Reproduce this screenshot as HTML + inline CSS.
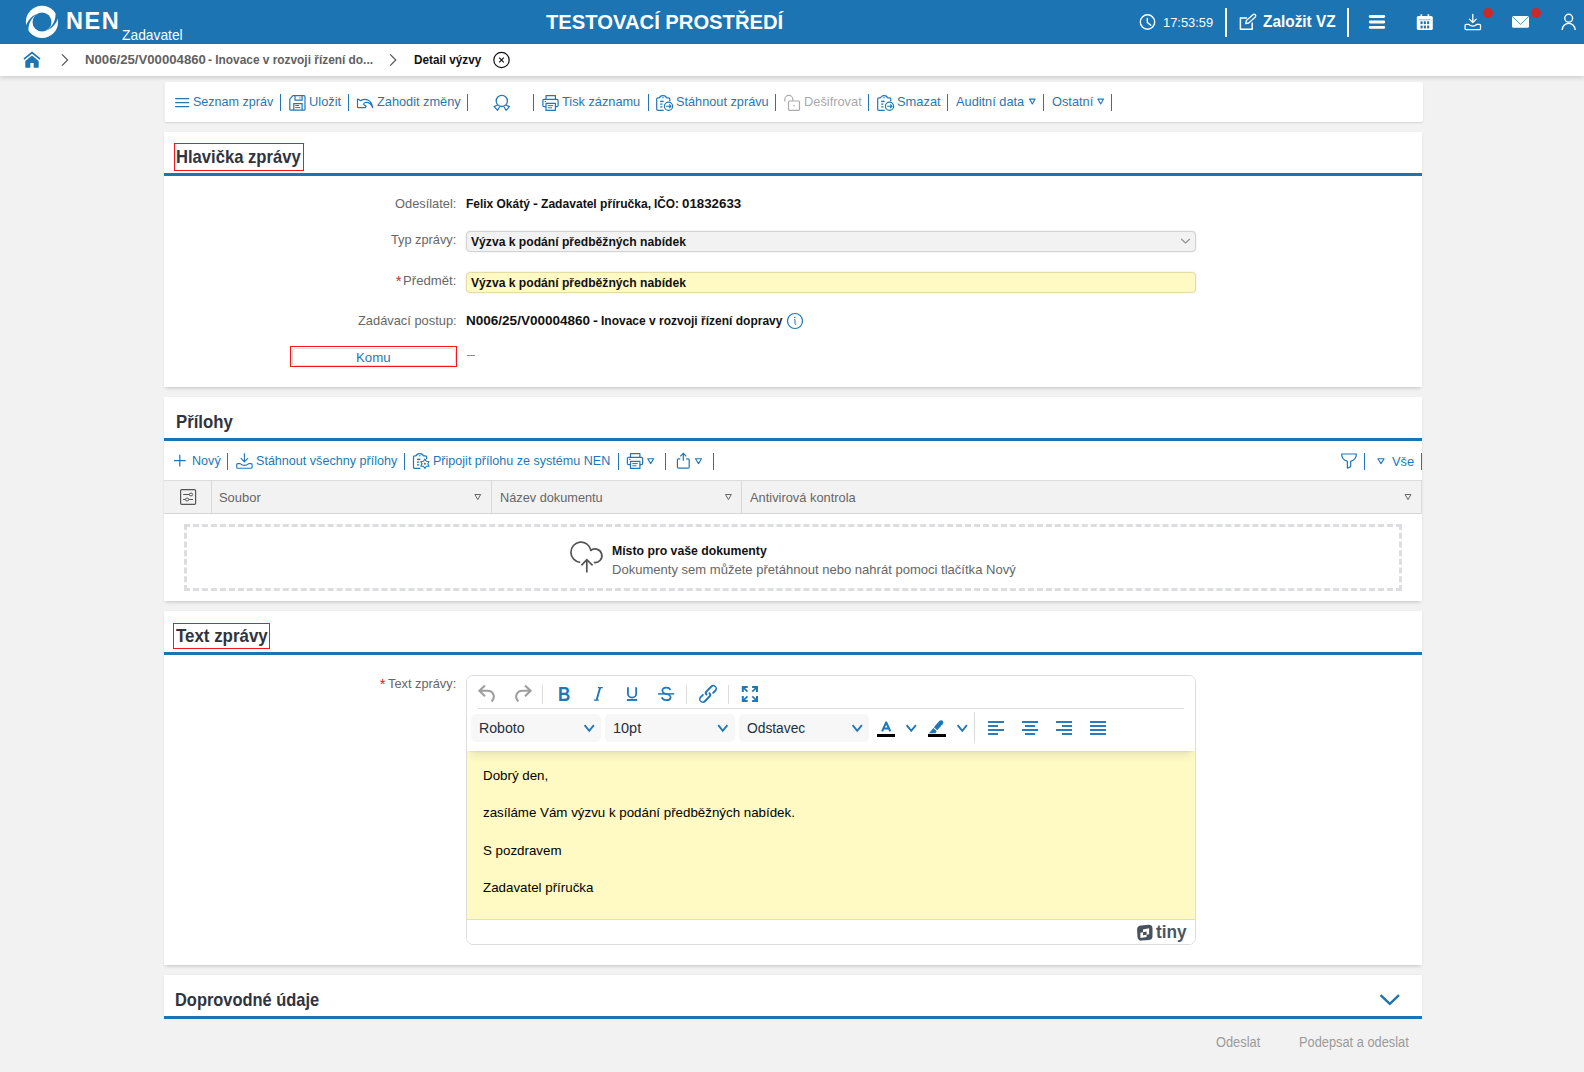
<!DOCTYPE html><html lang="cs"><head><meta charset="utf-8"><title>NEN - Detail výzvy</title><style>
*{box-sizing:border-box;margin:0;padding:0}
html,body{width:1584px;height:1072px;overflow:hidden}
body{background:#f2f2f2;font-family:"Liberation Sans",sans-serif;position:relative;color:#111}
.abs{position:absolute}
.t{position:absolute;white-space:nowrap;line-height:0;height:100px;font-size:13px}
.t i{display:inline-block;height:100px;width:0}
.t span{display:inline-block;transform-origin:0 50%}
.b{font-weight:700}
#topbar{position:absolute;left:0;top:0;width:1584px;height:44px;background:#1c74b3}
#crumbs{position:absolute;left:0;top:44px;width:1584px;height:32px;background:#fff;box-shadow:0 2px 4px rgba(0,0,0,.15)}
.card{position:absolute;left:164px;width:1258px;background:#fff;box-shadow:0 3px 4px -2px rgba(0,0,0,.16),0 1px 3px rgba(0,0,0,.05)}
.hline{position:absolute;left:0;width:100%;top:41px;height:3px;background:#1c74b3}
.sep{position:absolute;width:1.5px;background:#1f77b7}
.redbox{position:absolute;border:1.5px solid #f5141f}
svg{position:absolute;overflow:visible}
</style></head><body>
<div id="topbar"></div>
<div id="crumbs"></div>
<div class="abs" style="left:1225px;top:8px;width:2px;height:29px;background:#fff"></div>
<div class="abs" style="left:1347px;top:8px;width:2px;height:29px;background:#fff"></div>
<div class="abs" style="left:1483px;top:8px;width:10px;height:10px;border-radius:50%;background:#cb2a2b"></div>
<div class="abs" style="left:1531px;top:8px;width:10px;height:10px;border-radius:50%;background:#cb2a2b"></div>
<div class="card" style="top:82px;height:40px;width:1259px;border-radius:2px;box-shadow:0 1px 2px rgba(0,0,0,.13),inset 1px 0 0 #f0f0f0"></div>
<div class="sep" style="left:279.75px;top:94px;height:16.5px"></div>
<div class="sep" style="left:347.75px;top:94px;height:16.5px"></div>
<div class="sep" style="left:466.75px;top:94px;height:16.5px"></div>
<div class="sep" style="left:532.75px;top:94px;height:16.5px"></div>
<div class="sep" style="left:647.75px;top:94px;height:16.5px"></div>
<div class="sep" style="left:774.75px;top:94px;height:16.5px"></div>
<div class="sep" style="left:867.75px;top:94px;height:16.5px"></div>
<div class="sep" style="left:946.75px;top:94px;height:16.5px"></div>
<div class="sep" style="left:1042.75px;top:94px;height:16.5px"></div>
<div class="sep" style="left:1110.75px;top:94px;height:16.5px"></div>
<div class="card" style="top:132px;height:255px"><div class="hline"></div></div>
<div class="redbox" style="left:173.5px;top:143px;width:130.5px;height:28px"></div>
<div class="abs" style="left:466px;top:231px;width:730px;height:21px;background:#f2f2f2;border:1px solid #d3d3d3;border-radius:4px;box-shadow:0 0 2px rgba(0,0,0,.12)"></div>
<div class="abs" style="left:466px;top:272px;width:730px;height:21px;background:#fff9c4;border:1px solid #e4dca2;border-radius:4px;box-shadow:0 0 2px rgba(0,0,0,.12)"></div>
<div class="abs" style="left:291.5px;top:347.5px;width:164px;height:18px;background:#fff;border:1px solid #dcdcdc;border-radius:4px"></div>
<div class="redbox" style="left:290px;top:346px;width:167px;height:20.5px"></div>
<div class="abs" style="left:466.5px;top:354.8px;width:8.5px;height:1.2px;background:#8c8c8c"></div>
<div class="card" style="top:397px;height:204px"><div class="hline"></div></div>
<div class="sep" style="left:226.75px;top:452.5px;height:17px"></div>
<div class="sep" style="left:403.75px;top:452.5px;height:17px"></div>
<div class="sep" style="left:617.75px;top:452.5px;height:17px"></div>
<div class="sep" style="left:664.75px;top:452.5px;height:17px"></div>
<div class="sep" style="left:712.75px;top:452.5px;height:17px"></div>
<div class="sep" style="left:1363.75px;top:452.5px;height:17px"></div>
<div class="sep" style="left:1420.5px;top:452.5px;height:17px"></div>
<div class="abs" style="left:164px;top:480px;width:1258px;height:34px;background:#f2f2f2;border-top:1px solid #dcdcdc;border-bottom:1px solid #d6d6d6;border-right:1px solid #dcdcdc"></div>
<div class="abs" style="left:211px;top:481px;width:1px;height:32px;background:#d9d9d9"></div>
<div class="abs" style="left:491px;top:481px;width:1px;height:32px;background:#d9d9d9"></div>
<div class="abs" style="left:741px;top:481px;width:1px;height:32px;background:#d9d9d9"></div>
<div class="abs" style="left:184px;top:524px;width:1218px;height:67px;border:3px dashed #dcdde0"></div>
<div class="card" style="top:611px;height:354px"><div class="hline"></div></div>
<div class="redbox" style="left:173px;top:623px;width:97px;height:25.5px"></div>
<div class="abs" style="left:466px;top:675px;width:730px;height:270px;background:#fff;border:1px solid #dcdcdc;border-radius:7px;overflow:hidden"><div class="abs" style="left:0;top:75px;width:728px;height:168px;background:#fff9c4"></div><div class="abs" style="left:0;top:0;width:728px;height:75px;background:#fff;box-shadow:0 2px 2px -2px rgba(34,47,62,.18),0 8px 8px -4px rgba(34,47,62,.10)"></div><div class="abs" style="left:0;top:243px;width:728px;height:26px;background:#fff;border-top:1px solid #dcdcdc"></div><div class="abs" style="left:11px;top:32px;width:706px;height:1px;background:#dedede"></div></div>
<div class="abs" style="left:471px;top:714px;width:130px;height:28px;background:#f7f7f7;border-radius:5px"></div>
<div class="abs" style="left:605px;top:714px;width:130px;height:28px;background:#f7f7f7;border-radius:5px"></div>
<div class="abs" style="left:739px;top:714px;width:130px;height:28px;background:#f7f7f7;border-radius:5px"></div>
<div class="abs" style="left:542.0px;top:685.0px;width:1px;height:18.5px;background:#dcdcdc"></div>
<div class="abs" style="left:686.0px;top:685.0px;width:1px;height:18.5px;background:#dcdcdc"></div>
<div class="abs" style="left:728.0px;top:685.0px;width:1px;height:18.5px;background:#dcdcdc"></div>
<div class="abs" style="left:974.0px;top:712.0px;width:1px;height:30.5px;background:#dcdcdc"></div>
<div class="abs" style="left:877px;top:734px;width:18px;height:3px;background:#000"></div>
<div class="abs" style="left:928px;top:734px;width:18px;height:3px;background:#000"></div>
<div class="card" style="top:975px;height:44px;box-shadow:0 0 3px rgba(0,0,0,.06)"><div class="hline"></div></div>
<svg width="1584" height="1072" viewBox="0 0 1584 1072" style="left:0;top:0"><circle cx="42" cy="21.9" r="16.1" fill="#fff"/>
<circle cx="42" cy="22" r="9.5" fill="#1c74b3"/>
<path d="M36.4 14 C30 17 27 22 25.4 27.6 L28.6 32.8 C27.6 25 30.6 19 36.4 14 Z" fill="#1c74b3"/>
<path d="M47.6 30 C54 27 57 22 58.6 16.4 L55.4 11.2 C56.4 19 53.4 25 47.6 30 Z" fill="#1c74b3"/>
<path d="M24.5 58.7 L32 52.7 L39.5 58.7" fill="none" stroke="#1c74b3" stroke-width="1.7" stroke-linecap="round" stroke-linejoin="miter"/>
<path d="M25.3 61 L32 55.5 L38.7 61 V67.8 H33.7 V63 H30.3 V67.8 H25.3 Z" fill="#1c74b3"/>
<path d="M62 54.4 L67.6 60 L62 65.6" fill="none" stroke="#555" stroke-width="1.2"/>
<path d="M390.2 54.4 L395.8 60 L390.2 65.6" fill="none" stroke="#555" stroke-width="1.2"/>
<circle cx="501.5" cy="60" r="7.7" fill="none" stroke="#111" stroke-width="1.2"/>
<path d="M499.2 57.7 L503.8 62.3 M503.8 57.7 L499.2 62.3" fill="none" stroke="#111" stroke-width="1.2"/>
<circle cx="1147.5" cy="22" r="7.2" fill="none" stroke="#fff" stroke-width="1.4"/>
<path d="M1147.3 18.4 V22.4 L1150.8 25.2" fill="none" stroke="#fff" stroke-width="1.4" stroke-linecap="round" stroke-linejoin="round"/>
<path d="M1247 17.9 H1240.4 V29.2 H1252.2 V22.6" fill="none" stroke="#fff" stroke-width="1.5" stroke-linejoin="round"/>
<path d="M1245.6 23.6 L1246.4 20.6 L1252.9 14.7 a1.7 1.7 0 0 1 2.4 2.4 L1248.7 23 Z" fill="none" stroke="#fff" stroke-width="1.3" stroke-linejoin="round"/>
<path d="M1370.2 16.5 H1383.8" fill="none" stroke="#fff" stroke-width="2.8" stroke-linecap="round"/>
<path d="M1370.2 22 H1383.8" fill="none" stroke="#fff" stroke-width="2.8" stroke-linecap="round"/>
<path d="M1370.2 27.4 H1383.8" fill="none" stroke="#fff" stroke-width="2.8" stroke-linecap="round"/>
<rect x="1416.8" y="16" width="16" height="14" rx="1.6" fill="#fff"/>
<path d="M1421.3 14.2 V17 M1428.4 14.2 V17" fill="none" stroke="#fff" stroke-width="1.7"/>
<rect x="1420.5" y="21.3" width="2.1" height="2.8" fill="#1c74b3"/>
<rect x="1420.5" y="25.6" width="2.1" height="2.8" fill="#1c74b3"/>
<rect x="1423.8" y="21.3" width="2.1" height="2.8" fill="#1c74b3"/>
<rect x="1423.8" y="25.6" width="2.1" height="2.8" fill="#1c74b3"/>
<rect x="1427.1" y="21.3" width="2.1" height="2.8" fill="#1c74b3"/>
<rect x="1427.1" y="25.6" width="2.1" height="2.8" fill="#1c74b3"/>
<rect x="1418.8" y="19.3" width="12" height="0.9" fill="#1c74b3" opacity=".55"/>
<path d="M1472.8 14.3 V22.3 M1469.4 19.1 L1472.8 22.5 L1476.2 19.1" fill="none" stroke="#fff" stroke-width="1.3" stroke-linecap="round" stroke-linejoin="round"/>
<path d="M1466.1 24.3 h2.4 q4.3 3.6 8.6 0 h2.4 a1 1 0 0 1 1 1 v3.4 a1 1 0 0 1 -1 1 h-13.4 a1 1 0 0 1 -1 -1 v-3.4 a1 1 0 0 1 1 -1 z" fill="none" stroke="#fff" stroke-width="1.3" stroke-linejoin="round"/>
<rect x="1512" y="16" width="17" height="11.8" rx="1.6" fill="#fff"/>
<path d="M1512.6 16.8 L1520.5 24.4 L1528.4 16.8" fill="none" stroke="#1c74b3" stroke-width="0.8"/>
<circle cx="1568.7" cy="18.2" r="3.9" fill="none" stroke="#fff" stroke-width="1.4"/>
<path d="M1562.2 30 a6.5 6.6 0 0 1 13 0" fill="none" stroke="#fff" stroke-width="1.4"/>
<path d="M175.2 98.5 H189.2 M175.2 102.5 H189.2 M175.2 106.5 H189.2" fill="none" stroke="#1f77b7" stroke-width="1.25"/>
<path d="M292.9 95.7 H304 a1 1 0 0 1 1 1 V109.2 a1 1 0 0 1 -1 1 H290.8 a1 1 0 0 1 -1 -1 V99.2 Z" fill="none" stroke="#1f77b7" stroke-width="1.2" stroke-linejoin="round"/>
<path d="M295 95.8 V100.2 H302.1 V95.8" fill="none" stroke="#1f77b7" stroke-width="1.2"/>
<path d="M299.9 97.2 V98.4" fill="none" stroke="#1f77b7" stroke-width="1.1"/>
<path d="M293.8 110 V103.7 H302.1 V110" fill="none" stroke="#1f77b7" stroke-width="1.2"/>
<path d="M295.3 105.5 H299 M295.3 107.6 H300.3" fill="none" stroke="#1f77b7" stroke-width="1"/>
<path d="M357.5 99.7 Q357.5 98.7 358.5 99.2 L360.2 100.5 Q361 100.9 361.9 99.9 C365.4 98.5 371.6 99.4 372.7 107.7 C371 103.2 368 102.2 365.3 102.5 Q363.5 103 363.7 104.4 L366.2 106.2 L365.3 107.6 H358.4 Q357.5 107.6 357.5 106.7 Z" fill="none" stroke="#1f77b7" stroke-width="1.2" stroke-linejoin="round"/>
<circle cx="501.8" cy="100.9" r="5.6" fill="none" stroke="#1f77b7" stroke-width="1.3"/>
<path d="M497.6 105 L494.1 106.6 L497.6 110.3 L499.8 106.5 M506 105 L509.5 106.6 L506 110.3 L503.8 106.5" fill="none" stroke="#1f77b7" stroke-width="1.2" stroke-linejoin="round"/>
<path d="M546 99.3 V95.7 H555.4 V99.3" fill="none" stroke="#1f77b7" stroke-width="1.2" stroke-linejoin="round"/>
<path d="M546 106.6 H544.1 a1.2 1.2 0 0 1 -1.2 -1.2 V100.5 a1.2 1.2 0 0 1 1.2 -1.2 H556.9 a1.2 1.2 0 0 1 1.2 1.2 V105.4 a1.2 1.2 0 0 1 -1.2 1.2 H555.4" fill="none" stroke="#1f77b7" stroke-width="1.2"/>
<path d="M546 103.4 H555.4 V110.4 H546 Z" fill="none" stroke="#1f77b7" stroke-width="1.2" stroke-linejoin="round"/>
<path d="M547.8 105.6 H553.2 M547.8 107.8 H552" fill="none" stroke="#1f77b7" stroke-width="1"/>
<path d="M544.6 101.4 h1.4" fill="none" stroke="#1f77b7" stroke-width="1"/>
<path d="M630.5 457.3 V453.7 H639.9 V457.3" fill="none" stroke="#1f77b7" stroke-width="1.2" stroke-linejoin="round"/>
<path d="M630.5 464.6 H628.6 a1.2 1.2 0 0 1 -1.2 -1.2 V458.5 a1.2 1.2 0 0 1 1.2 -1.2 H641.4 a1.2 1.2 0 0 1 1.2 1.2 V463.4 a1.2 1.2 0 0 1 -1.2 1.2 H639.9" fill="none" stroke="#1f77b7" stroke-width="1.2"/>
<path d="M630.5 461.4 H639.9 V468.4 H630.5 Z" fill="none" stroke="#1f77b7" stroke-width="1.2" stroke-linejoin="round"/>
<path d="M632.3 463.6 H637.7 M632.3 465.8 H636.5" fill="none" stroke="#1f77b7" stroke-width="1"/>
<path d="M629.1 459.4 h1.4" fill="none" stroke="#1f77b7" stroke-width="1"/>
<path d="M659.6 97.8 H657.9 a1.2 1.2 0 0 0 -1.2 1.2 V109.2 a1.2 1.2 0 0 0 1.2 1.2 H663.6" fill="none" stroke="#1f77b7" stroke-width="1.2"/>
<path d="M666.4 97.8 H668.6 a1.2 1.2 0 0 1 1.2 1.2 V101.2" fill="none" stroke="#1f77b7" stroke-width="1.2"/>
<path d="M659.6 98 a3.4 2.3 0 0 1 6.8 0" fill="none" stroke="#1f77b7" stroke-width="1.2"/>
<circle cx="663" cy="97.7" r="0.7" fill="#1f77b7"/>
<path d="M660.2 101.4 h3.4" fill="none" stroke="#1f77b7" stroke-width="1.5"/>
<path d="M660.2 104.1 h2.2 M660.2 106.8 h2.2" fill="none" stroke="#1f77b7" stroke-width="1.3"/>
<circle cx="668.5" cy="106.2" r="4.1" fill="none" stroke="#1f77b7" stroke-width="1.2"/>
<path d="M666 106.2 H670.8 M669.2 104.4 L671 106.2 L669.2 108" fill="none" stroke="#1f77b7" stroke-width="1.1"/>
<path d="M880.6 97.8 H878.9 a1.2 1.2 0 0 0 -1.2 1.2 V109.2 a1.2 1.2 0 0 0 1.2 1.2 H884.6" fill="none" stroke="#1f77b7" stroke-width="1.2"/>
<path d="M887.4 97.8 H889.6 a1.2 1.2 0 0 1 1.2 1.2 V101.2" fill="none" stroke="#1f77b7" stroke-width="1.2"/>
<path d="M880.6 98 a3.4 2.3 0 0 1 6.8 0" fill="none" stroke="#1f77b7" stroke-width="1.2"/>
<circle cx="884" cy="97.7" r="0.7" fill="#1f77b7"/>
<path d="M881.2 101.4 h3.4" fill="none" stroke="#1f77b7" stroke-width="1.5"/>
<path d="M881.2 104.1 h2.2 M881.2 106.8 h2.2" fill="none" stroke="#1f77b7" stroke-width="1.3"/>
<circle cx="889.5" cy="106.2" r="4.1" fill="none" stroke="#1f77b7" stroke-width="1.2"/>
<path d="M887 106.2 H891.8 M890.2 104.4 L892 106.2 L890.2 108" fill="none" stroke="#1f77b7" stroke-width="1.1"/>
<path d="M416.4 455.8 H414.7 a1.2 1.2 0 0 0 -1.2 1.2 V467.2 a1.2 1.2 0 0 0 1.2 1.2 H420.4" fill="none" stroke="#1f77b7" stroke-width="1.2"/>
<path d="M423.2 455.8 H425.4 a1.2 1.2 0 0 1 1.2 1.2 V459.2" fill="none" stroke="#1f77b7" stroke-width="1.2"/>
<path d="M416.4 456 a3.4 2.3 0 0 1 6.8 0" fill="none" stroke="#1f77b7" stroke-width="1.2"/>
<circle cx="419.8" cy="455.7" r="0.7" fill="#1f77b7"/>
<path d="M417 459.4 h3.4" fill="none" stroke="#1f77b7" stroke-width="1.5"/>
<path d="M417 462.1 h2.2 M417 464.8 h2.2" fill="none" stroke="#1f77b7" stroke-width="1.3"/>
<path d="M424.90 459.10 L426.35 461.29 L428.97 461.45 L427.80 463.80 L428.97 466.15 L426.35 466.31 L424.90 468.50 L423.45 466.31 L420.83 466.15 L422.00 463.80 L420.83 461.45 L423.45 461.29 Z" fill="none" stroke="#1f77b7" stroke-width="1.1" stroke-linejoin="round"/>
<circle cx="424.9" cy="463.8" r="1" fill="#1f77b7"/>
<path d="M784.8 101.6 V99.4 a4 4 0 0 1 8 0 V101" fill="none" stroke="#ababab" stroke-width="1.2"/>
<rect x="788.5" y="101" width="11" height="9.3" rx="1" fill="none" stroke="#ababab" stroke-width="1.2"/>
<path d="M794 105 V106.6" fill="none" stroke="#ababab" stroke-width="1.2"/>
<path d="M1029.5 99.1 H1035.1 L1032.3 104 Z" fill="none" stroke="#1f77b7" stroke-width="1.1" stroke-linejoin="round"/>
<path d="M1097.9 99.1 H1103.5 L1100.7 104 Z" fill="none" stroke="#1f77b7" stroke-width="1.1" stroke-linejoin="round"/>
<path d="M647.7 458.7 H653.7 L650.7 463.6 Z" fill="none" stroke="#1f77b7" stroke-width="1.1" stroke-linejoin="round"/>
<path d="M695.5 458.7 H701.5 L698.5 463.6 Z" fill="none" stroke="#1f77b7" stroke-width="1.1" stroke-linejoin="round"/>
<path d="M1377.9 458.7 H1384.1 L1381 463.6 Z" fill="none" stroke="#1f77b7" stroke-width="1.1" stroke-linejoin="round"/>
<path d="M474.9 494.5 H480.7 L477.8 499.6 Z" fill="none" stroke="#666" stroke-width="1" stroke-linejoin="round"/>
<path d="M725.5 494.5 H731.3 L728.4 499.6 Z" fill="none" stroke="#666" stroke-width="1" stroke-linejoin="round"/>
<path d="M1405.1 494.5 H1410.9 L1408 499.6 Z" fill="none" stroke="#666" stroke-width="1" stroke-linejoin="round"/>
<path d="M179.8 454.8 V466.6 M173.9 460.7 H185.7" fill="none" stroke="#1f77b7" stroke-width="1.2"/>
<path d="M244.4 453.6 V461.6 M241 458.4 L244.4 461.8 L247.8 458.4" fill="none" stroke="#1f77b7" stroke-width="1.1" stroke-linecap="round" stroke-linejoin="round"/>
<path d="M237.7 463.6 h2.4 q4.3 3.6 8.6 0 h2.4 a1 1 0 0 1 1 1 v2.7 a1 1 0 0 1 -1 1 h-13.4 a1 1 0 0 1 -1 -1 v-2.7 a1 1 0 0 1 1 -1 z" fill="none" stroke="#1f77b7" stroke-width="1.1" stroke-linejoin="round"/>
<path d="M680.3 458.9 H678.6 a1.2 1.2 0 0 0 -1.2 1.2 V466.9 a1.2 1.2 0 0 0 1.2 1.2 H688 a1.2 1.2 0 0 0 1.2 -1.2 V460.1 a1.2 1.2 0 0 0 -1.2 -1.2 H686.2" fill="none" stroke="#1f77b7" stroke-width="1.2"/>
<path d="M683.3 453.6 V460.8 M680.3 456.4 L683.3 453.4 L686.3 456.4" fill="none" stroke="#1f77b7" stroke-width="1.2"/>
<path d="M1341.6 454 H1356.4 Q1356.2 459.8 1350.7 461.4 V466.6 L1347.4 468.2 V461.4 Q1341.8 459.8 1341.6 454 Z" fill="none" stroke="#1f77b7" stroke-width="1.2" stroke-linejoin="round"/>
<rect x="180.6" y="489.6" width="15" height="14.8" rx="1.2" fill="none" stroke="#555" stroke-width="1.2"/>
<path d="M183.2 494.5 H189.4 M183.2 499.5 H185.3 M189 499.5 H193" fill="none" stroke="#555" stroke-width="1"/>
<ellipse cx="191" cy="494.5" rx="1.7" ry="1.4" fill="none" stroke="#555" stroke-width="1"/>
<ellipse cx="187.1" cy="499.5" rx="1.7" ry="1.4" fill="none" stroke="#555" stroke-width="1"/>
<circle cx="795" cy="321" r="7.5" fill="none" stroke="#1f77b7" stroke-width="1.2"/>
<path d="M794.2 319.6 H795 V323.8 Q795 324.6 796.2 324.5" fill="none" stroke="#1f77b7" stroke-width="1"/>
<circle cx="794.8" cy="317.4" r="0.75" fill="#1f77b7"/>
<path d="M1181.2 239 L1185.5 243 L1189.8 239" fill="none" stroke="#8c8c8c" stroke-width="1.1"/>
<path d="M580.2 562.3 A10.1 10.1 0 1 1 590.9 550.2" fill="none" stroke="#555" stroke-width="1.7" stroke-linecap="butt"/>
<path d="M590.2 551 A6.8 6.8 0 1 1 593.8 562.4" fill="none" stroke="#555" stroke-width="1.7"/>
<path d="M586.8 572.6 V559.8 M581.4 565.4 L586.8 559.7 L592.6 565.4" fill="none" stroke="#555" stroke-width="1.7"/>
<path d="M485 685.4 L479.4 690.8 L485 696.3 M480 690.8 H487.4 C493.4 690.8 496 697 491.6 701.6" fill="none" stroke="#9e9e9e" stroke-width="2.1" stroke-linejoin="miter"/>
<path d="M525 685.4 L530.6 690.8 L525 696.3 M530 690.8 H522.6 C516.6 690.8 514 697 518.4 701.6" fill="none" stroke="#9e9e9e" stroke-width="2.1" stroke-linejoin="miter"/>
<path d="M627.9 687.2 V693.4 a4.15 4.15 0 0 0 8.3 0 V687.2" fill="none" stroke="#1f77b7" stroke-width="1.8"/>
<path d="M626.9 700 H637.2" fill="none" stroke="#1f77b7" stroke-width="1.9"/>
<path d="M670.3 690.2 C669.6 686.6 662.6 686.6 662.4 690.6 C662.3 692.6 664 693.5 666.4 694 C669 694.6 670.8 695.6 670.6 697.6 C670.2 701.2 662.4 701 661.9 697.2" fill="none" stroke="#1f77b7" stroke-width="1.7"/>
<path d="M658 693.9 H674.2" fill="none" stroke="#1f77b7" stroke-width="1.5"/>
<g transform="translate(696 681.9) scale(1.0)"><path fill="#1f77b7" d="M6.2 12.3a1 1 0 0 1 1.4 1.4l-2 2a2 2 0 1 0 2.6 2.8l4.8-4.8a1 1 0 0 0 0-1.4 1 1 0 1 1 1.4-1.3 2.9 2.9 0 0 1 0 4L9.6 20a3.9 3.9 0 0 1-5.5-5.5l2-2Zm11.6-.6a1 1 0 0 1-1.4-1.4l2-2a2 2 0 1 0-2.6-2.8L11 10.3a1 1 0 0 0 0 1.4A1 1 0 1 1 9.6 13a2.9 2.9 0 0 1 0-4L14.4 4a3.9 3.9 0 0 1 5.5 5.5l-2 2Z"/></g>
<path d="M596.6 700 L600.1 687.8" fill="none" stroke="#1f77b7" stroke-width="1.9"/>
<path d="M598 687.7 H602.8 M593.9 700.1 H598.8" fill="none" stroke="#1f77b7" stroke-width="1.3"/>
<path d="M742.8 691.9 V687 H747.7" fill="none" stroke="#1f77b7" stroke-width="2" stroke-linejoin="miter"/>
<path d="M743.4 687.6 L747.5 691.7" fill="none" stroke="#1f77b7" stroke-width="1.7"/>
<path d="M757 691.9 V687 H752.1" fill="none" stroke="#1f77b7" stroke-width="2" stroke-linejoin="miter"/>
<path d="M756.4 687.6 L752.3 691.7" fill="none" stroke="#1f77b7" stroke-width="1.7"/>
<path d="M742.8 696.1 V701 H747.7" fill="none" stroke="#1f77b7" stroke-width="2" stroke-linejoin="miter"/>
<path d="M743.4 700.4 L747.5 696.3" fill="none" stroke="#1f77b7" stroke-width="1.7"/>
<path d="M757 696.1 V701 H752.1" fill="none" stroke="#1f77b7" stroke-width="2" stroke-linejoin="miter"/>
<path d="M756.4 700.4 L752.3 696.3" fill="none" stroke="#1f77b7" stroke-width="1.7"/>
<path d="M584.6 725.2 L589.25 730.8 L593.9 725.2" fill="none" stroke="#1f77b7" stroke-width="1.9"/>
<path d="M718.2 725.2 L722.8 730.8 L727.4 725.2" fill="none" stroke="#1f77b7" stroke-width="1.9"/>
<path d="M852.6 725.2 L857.25 730.8 L861.9 725.2" fill="none" stroke="#1f77b7" stroke-width="1.9"/>
<path d="M906.6 725.2 L911.25 730.8 L915.9 725.2" fill="none" stroke="#1f77b7" stroke-width="1.9"/>
<path d="M957.6 725.2 L962.25 730.8 L966.9 725.2" fill="none" stroke="#1f77b7" stroke-width="1.9"/>
<path d="M882.1 731.4 L886.2 722.4 L890.3 731.4 M883.6 728.5 H888.8" fill="none" stroke="#1f77b7" stroke-width="2.1" stroke-linejoin="round"/>
<path d="M941.0 722.6 L935.6 728.8" fill="none" stroke="#1f77b7" stroke-width="4.5"/>
<circle cx="941.1" cy="722.6" r="2.25" fill="#1f77b7"/>
<path d="M933.3 728 L936.7 731 L935.4 733.2 H929 Z" fill="#1f77b7"/>
<path d="M988 722 H1004" fill="none" stroke="#1f77b7" stroke-width="1.9"/>
<path d="M988 726 H998" fill="none" stroke="#1f77b7" stroke-width="1.9"/>
<path d="M988 730 H1004" fill="none" stroke="#1f77b7" stroke-width="1.9"/>
<path d="M988 734 H998" fill="none" stroke="#1f77b7" stroke-width="1.9"/>
<path d="M1022 722 H1038" fill="none" stroke="#1f77b7" stroke-width="1.9"/>
<path d="M1025 726 H1035" fill="none" stroke="#1f77b7" stroke-width="1.9"/>
<path d="M1022 730 H1038" fill="none" stroke="#1f77b7" stroke-width="1.9"/>
<path d="M1025 734 H1035" fill="none" stroke="#1f77b7" stroke-width="1.9"/>
<path d="M1056 722 H1072" fill="none" stroke="#1f77b7" stroke-width="1.9"/>
<path d="M1062 726 H1072" fill="none" stroke="#1f77b7" stroke-width="1.9"/>
<path d="M1056 730 H1072" fill="none" stroke="#1f77b7" stroke-width="1.9"/>
<path d="M1062 734 H1072" fill="none" stroke="#1f77b7" stroke-width="1.9"/>
<path d="M1090 722 H1106" fill="none" stroke="#1f77b7" stroke-width="1.9"/>
<path d="M1090 726 H1106" fill="none" stroke="#1f77b7" stroke-width="1.9"/>
<path d="M1090 730 H1106" fill="none" stroke="#1f77b7" stroke-width="1.9"/>
<path d="M1090 734 H1106" fill="none" stroke="#1f77b7" stroke-width="1.9"/>
<path d="M1141.3 925.4 L1148.6 924.7 a3.7 3.7 0 0 1 3.9 3.5 L1152.5 936.2 a3.7 3.7 0 0 1 -3.4 3.7 L1141.6 940.6 a3.7 3.7 0 0 1 -4.1 -3.5 L1137.1 929.4 a3.9 3.9 0 0 1 4.2 -4 Z" fill="#48525f"/>
<path d="M1143 929.4 L1149.1 928.2 V934.3 L1143 935.2 Z" fill="#fff"/>
<path d="M1140.4 932.7 L1146.6 931.6 V937 L1140.4 938.1 Z" fill="#fff"/>
<path d="M1143 932.3 L1146.6 931.6 V934.7 L1143 935.2 Z" fill="#48525f"/>
<path d="M1380.6 995.2 L1389.8 1003.8 L1399 995.2" fill="none" stroke="#1c74b3" stroke-width="2.4"/></svg>
<div class="t b" style="left:65.90px;top:-71.00px;font-size:23.5px;color:#fff;letter-spacing:1.6px"><i></i><span>NEN</span></div>
<div class="t" style="left:121.90px;top:-60.00px;font-size:14.5px;color:#fff"><i></i><span style="transform:scaleX(0.9531)">Zadavatel</span></div>
<div class="t b" style="left:546.40px;top:-71.00px;font-size:20.5px;color:#fff"><i></i><span style="transform:scaleX(0.9854)">TESTOVACÍ PROSTŘEDÍ</span></div>
<div class="t" style="left:1163.40px;top:-73.00px;font-size:13.5px;color:#fff"><i></i><span style="transform:scaleX(0.9551)">17:53:59</span></div>
<div class="t b" style="left:1262.90px;top:-73.00px;font-size:16px;color:#fff"><i></i><span style="transform:scaleX(0.9621)">Založit VZ</span></div>
<div class="t b" style="left:84.70px;top:-36.00px;font-size:13.5px;color:#616161"><i></i><span style="transform:scaleX(0.9760)">N006/25/V00004860</span></div>
<div class="t b" style="left:208.20px;top:-36.00px;font-size:13.5px;color:#616161"><i></i><span style="transform:scaleX(0.8798)">- Inovace v rozvoji řízení do...</span></div>
<div class="t b" style="left:413.60px;top:-36.00px;font-size:13.5px;color:#111"><i></i><span style="transform:scaleX(0.8694)">Detail výzvy</span></div>
<div class="t" style="left:193.40px;top:6.00px;font-size:13.5px;color:#1f77b7"><i></i><span style="transform:scaleX(0.9293)">Seznam zpráv</span></div>
<div class="t" style="left:308.90px;top:6.00px;font-size:13.5px;color:#1f77b7"><i></i><span style="transform:scaleX(0.9536)">Uložit</span></div>
<div class="t" style="left:376.90px;top:6.00px;font-size:13.5px;color:#1f77b7"><i></i><span style="transform:scaleX(0.9453)">Zahodit změny</span></div>
<div class="t" style="left:562.40px;top:6.00px;font-size:13.5px;color:#1f77b7"><i></i><span style="transform:scaleX(0.9447)">Tisk záznamu</span></div>
<div class="t" style="left:675.90px;top:6.00px;font-size:13.5px;color:#1f77b7"><i></i><span style="transform:scaleX(0.9428)">Stáhnout zprávu</span></div>
<div class="t" style="left:804.20px;top:6.00px;font-size:13.5px;color:#a9a9a9"><i></i><span style="transform:scaleX(0.9493)">Dešifrovat</span></div>
<div class="t" style="left:896.90px;top:6.00px;font-size:13.5px;color:#1f77b7"><i></i><span style="transform:scaleX(0.9545)">Smazat</span></div>
<div class="t" style="left:956.40px;top:6.00px;font-size:13.5px;color:#1f77b7"><i></i><span style="transform:scaleX(0.9464)">Auditní data</span></div>
<div class="t" style="left:1051.90px;top:6.00px;font-size:13.5px;color:#1f77b7"><i></i><span style="transform:scaleX(0.9464)">Ostatní</span></div>
<div class="t b" style="left:175.90px;top:63.00px;font-size:18.5px;color:#2f343f"><i></i><span style="transform:scaleX(0.8981)">Hlavička zprávy</span></div>
<div class="t b" style="left:175.90px;top:328.00px;font-size:18.5px;color:#2f343f"><i></i><span style="transform:scaleX(0.9040)">Přílohy</span></div>
<div class="t b" style="left:175.90px;top:542.00px;font-size:18.5px;color:#2f343f"><i></i><span style="transform:scaleX(0.9130)">Text zprávy</span></div>
<div class="t b" style="left:175.40px;top:906.00px;font-size:18.5px;color:#2f343f"><i></i><span style="transform:scaleX(0.8879)">Doprovodné údaje</span></div>
<div class="t" style="left:395.20px;top:108.00px;font-size:13.2px;color:#666"><i></i><span style="transform:scaleX(0.9739)">Odesílatel:</span></div>
<div class="t" style="left:391.40px;top:144.00px;font-size:13.2px;color:#666"><i></i><span style="transform:scaleX(0.9668)">Typ zprávy:</span></div>
<div class="t" style="left:403.20px;top:185.00px;font-size:13.2px;color:#666"><i></i><span style="transform:scaleX(0.9978)">Předmět:</span></div>
<div class="t" style="left:395.70px;top:186.00px;font-size:15px;color:#cb2a2b"><i></i><span>*</span></div>
<div class="t" style="left:358.00px;top:225.00px;font-size:13.2px;color:#666"><i></i><span style="transform:scaleX(0.9746)">Zadávací postup:</span></div>
<div class="t" style="left:388.40px;top:588.00px;font-size:13.2px;color:#666"><i></i><span style="transform:scaleX(0.9693)">Text zprávy:</span></div>
<div class="t" style="left:379.70px;top:589.00px;font-size:15px;color:#cb2a2b"><i></i><span>*</span></div>
<div class="t b" style="left:466.40px;top:108.00px;font-size:13px;color:#111"><i></i><span style="transform:scaleX(0.9196)">Felix Okátý</span></div>
<div class="t b" style="left:532.60px;top:108.00px;font-size:13px;color:#111"><i></i><span style="transform:scaleX(1.1281)">-</span></div>
<div class="t b" style="left:540.90px;top:108.00px;font-size:13px;color:#111"><i></i><span style="transform:scaleX(0.9291)">Zadavatel příručka,</span></div>
<div class="t b" style="left:654.40px;top:108.00px;font-size:13px;color:#111"><i></i><span style="transform:scaleX(0.9106)">IČO:</span></div>
<div class="t b" style="left:682.40px;top:108.00px;font-size:13px;color:#111"><i></i><span style="transform:scaleX(1.0234)">01832633</span></div>
<div class="t b" style="left:470.90px;top:146.00px;font-size:13px;color:#111"><i></i><span style="transform:scaleX(0.9325)">Výzva k podání předběžných nabídek</span></div>
<div class="t b" style="left:470.90px;top:187.00px;font-size:13px;color:#111"><i></i><span style="transform:scaleX(0.9325)">Výzva k podání předběžných nabídek</span></div>
<div class="t b" style="left:465.70px;top:225.00px;font-size:13px;color:#111"><i></i><span style="transform:scaleX(1.0404)">N006/25/V00004860</span></div>
<div class="t b" style="left:593.15px;top:225.00px;font-size:13px;color:#111"><i></i><span style="transform:scaleX(1.1396)">-</span></div>
<div class="t b" style="left:601.10px;top:225.00px;font-size:13px;color:#111"><i></i><span style="transform:scaleX(0.9231)">Inovace v rozvoji řízení dopravy</span></div>
<div class="t" style="left:356.40px;top:262.00px;font-size:13.2px;color:#1f77b7"><i></i><span style="transform:scaleX(1.0072)">Komu</span></div>
<div class="t" style="left:191.90px;top:365.00px;font-size:13.5px;color:#1f77b7"><i></i><span style="transform:scaleX(0.9329)">Nový</span></div>
<div class="t" style="left:256.40px;top:365.00px;font-size:13.5px;color:#1f77b7"><i></i><span style="transform:scaleX(0.9314)">Stáhnout všechny přílohy</span></div>
<div class="t" style="left:433.40px;top:365.00px;font-size:13.5px;color:#1f77b7"><i></i><span style="transform:scaleX(0.9298)">Připojit přílohu ze systému NEN</span></div>
<div class="t" style="left:1392.40px;top:366.00px;font-size:13.5px;color:#1f77b7"><i></i><span style="transform:scaleX(0.9542)">Vše</span></div>
<div class="t" style="left:219.40px;top:402.00px;font-size:13.5px;color:#666"><i></i><span style="transform:scaleX(0.9576)">Soubor</span></div>
<div class="t" style="left:499.90px;top:402.00px;font-size:13.5px;color:#666"><i></i><span style="transform:scaleX(0.9438)">Název dokumentu</span></div>
<div class="t" style="left:749.90px;top:402.00px;font-size:13.5px;color:#666"><i></i><span style="transform:scaleX(0.9517)">Antivirová kontrola</span></div>
<div class="t b" style="left:611.90px;top:455.00px;font-size:13px;color:#111"><i></i><span style="transform:scaleX(0.9434)">Místo pro vaše dokumenty</span></div>
<div class="t" style="left:611.90px;top:474.00px;font-size:13.5px;color:#666"><i></i><span style="transform:scaleX(0.9659)">Dokumenty sem můžete přetáhnout nebo nahrát pomoci tlačítka Nový</span></div>
<div class="t" style="left:478.90px;top:633.00px;font-size:14px;color:#222f3e"><i></i><span style="transform:scaleX(1.0120)">Roboto</span></div>
<div class="t" style="left:613.40px;top:633.00px;font-size:14px;color:#222f3e"><i></i><span style="transform:scaleX(1.0349)">10pt</span></div>
<div class="t" style="left:746.90px;top:633.00px;font-size:14px;color:#222f3e"><i></i><span style="transform:scaleX(0.9841)">Odstavec</span></div>
<div class="t" style="left:483.00px;top:680.00px;font-size:13.333px;color:#000"><i></i><span>Dobrý den,</span></div>
<div class="t" style="left:483.00px;top:717.00px;font-size:13.333px;color:#000"><i></i><span>zasíláme Vám výzvu k podání předběžných nabídek.</span></div>
<div class="t" style="left:483.00px;top:755.00px;font-size:13.333px;color:#000"><i></i><span>S pozdravem</span></div>
<div class="t" style="left:483.00px;top:792.00px;font-size:13.333px;color:#000"><i></i><span>Zadavatel příručka</span></div>
<div class="t b" style="left:1155.90px;top:838.00px;font-size:18.5px;color:#4a5562"><i></i><span style="transform:scaleX(0.9334)">tiny</span></div>
<div class="t b" style="left:557.60px;top:601.00px;font-size:19.6px;color:#1f77b7"><i></i><span style="transform:scaleX(0.8689)">B</span></div>
<div class="t" style="left:1215.90px;top:947.00px;font-size:14px;color:#9a9a9a"><i></i><span style="transform:scaleX(0.9161)">Odeslat</span></div>
<div class="t" style="left:1298.90px;top:947.00px;font-size:14px;color:#9a9a9a"><i></i><span style="transform:scaleX(0.9151)">Podepsat a odeslat</span></div>
</body></html>
